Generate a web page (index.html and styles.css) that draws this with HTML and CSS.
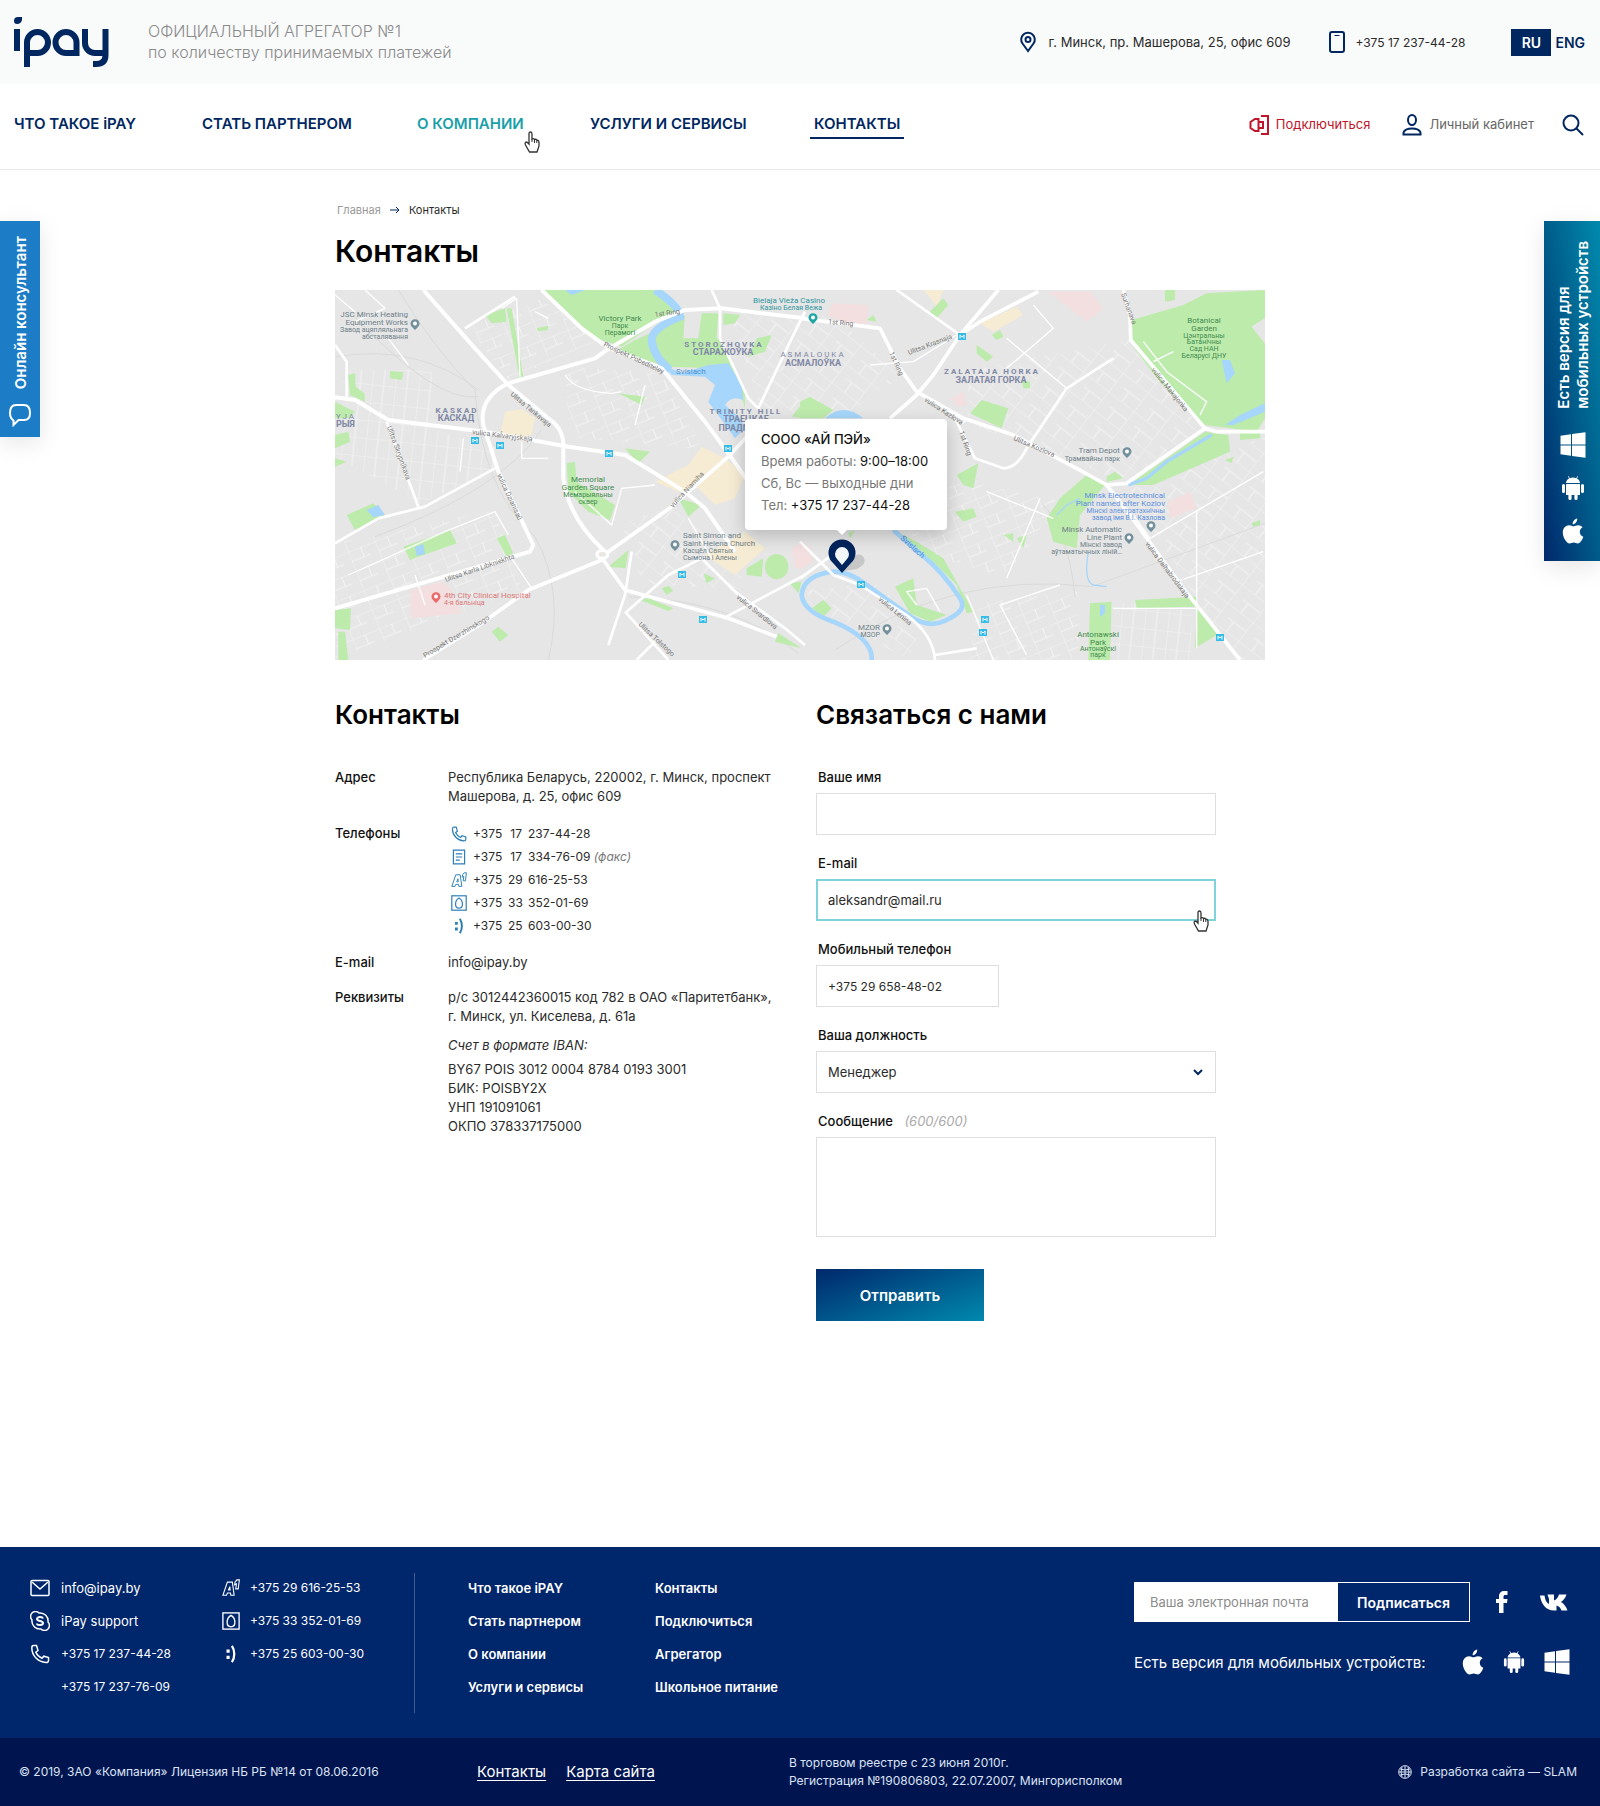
FILE: index.html
```html
<!DOCTYPE html>
<html lang="ru">
<head>
<meta charset="utf-8">
<meta name="viewport" content="width=device-width, initial-scale=1">
<title>Контакты — iPay</title>
<link rel="stylesheet" href="styles.css">
</head>
<body>
<svg class="sprite" aria-hidden="true">
  <symbol id="i-phone" viewBox="0 0 20 20"><path d="M3.500 1.500H6.500L8 6.500L5.800 8.200C7 11 9 13 12 14.300L13.800 12.200L18.500 13.600V16.500C18.500 18 17.500 18.600 16 18.500C8 18 2 12 1.800 4C1.800 2.500 2.300 1.500 3.500 1.500Z"/></symbol>
  <symbol id="i-a1" viewBox="0 0 20 20"><path d="M6 3.500H11.500L13.500 18H9.800L9.400 15.500H6L5 18H1Z M7.200 12.300H9L8.700 8.500Z M14.500 3.500L16.500 1H19.300L18 11H15.300L16 5.500L14 6.500Z" stroke-width="1.200"/></symbol>
  <symbol id="i-life" viewBox="0 0 20 20"><rect x="1" y="1" width="18" height="18"/><path d="M10 3.800C13 5.500 14.300 8.500 14.300 11.500C14.300 14.500 12.500 16.500 10 16.500S5.700 14.500 5.700 11.500C5.700 8.500 7 5.500 10 3.800Z"/></symbol>
  <symbol id="i-smile" viewBox="0 0 20 20"><path d="M5 5H8.500V8.500H5ZM5 12H8.500V15.500H5Z" fill="currentColor" stroke="none"/><path d="M11 1C14.500 6 14.500 14 11 19" fill="none" stroke-width="2.500"/></symbol>
  <symbol id="i-apple" viewBox="0 0 22 26"><path d="M15.200 0.500C15.400 3.800 13.200 6.200 10.700 6.300C10.400 3.600 12.600 1 15.200 0.500ZM20.600 9.200C18.500 10.400 17.700 12.100 17.800 14C17.900 16.300 19.200 17.900 21.300 18.800C20.500 21.500 18.300 25.300 15.800 25.500C14.300 25.500 13.500 24.600 11.700 24.600C9.900 24.600 9.100 25.500 7.600 25.500C4.600 25.500 0.800 19.700 0.800 14.600C0.800 10 3.700 7.200 7 7.200C8.900 7.200 10.300 8.300 11.400 8.300C12.500 8.300 14.100 7.200 16.300 7.200C17.900 7.200 19.600 7.900 20.600 9.200Z"/></symbol>
  <symbol id="i-android" viewBox="0 0 24 26"><path d="M7.500 1L8.800 3.200C10.700 2.400 13.300 2.400 15.200 3.200L16.500 1L17 1.400L15.900 3.600C17.700 4.600 18.800 6.100 19 8H5C5.200 6.100 6.300 4.600 8.100 3.600L7 1.400ZM5 9H19V20H16.600V23.500A1.500 1.500 0 0 1 13.400 23.500V20H10.600V23.500A1.500 1.500 0 0 1 7.400 23.500V20H5ZM1 10.500A1.500 1.500 0 0 1 4 10.500V16.500A1.500 1.500 0 0 1 1 16.500ZM20 10.500A1.500 1.500 0 0 1 23 10.500V16.500A1.500 1.500 0 0 1 20 16.500Z"/></symbol>
  <symbol id="i-windows" viewBox="0 0 26 26"><path d="M0.500 3.800L11 2.300V12.400H0.500ZM12 2.100L25.500 0.300V12.400H12ZM0.500 13.400H11V23.700L0.500 22.200ZM12 13.400H25.500V25.700L12 23.900Z"/></symbol>
  <symbol id="i-hand" viewBox="0 0 16 22"><path d="M5 13V3Q5 1 6.500 1T8 3V8Q9.500 7 10.500 8.500Q12 7.800 12.800 9.300Q15 9 15 11.500V15L13 21H5.500L1.500 14Q0.500 11.500 2 11Q3.500 11 5 13Z" fill="#fff" stroke="#333" stroke-width="1.300"/><path d="M8 8V11M10.500 9V12M12.800 10V12" stroke="#333" fill="none"/></symbol>
  <symbol id="i-metro" viewBox="0 0 8 7"><rect width="8" height="7" fill="#35bce6"/><path d="M2 5.500V2L4 4L6 2V5.500" fill="none" stroke="#fff"/></symbol>
  <symbol id="i-poi" viewBox="0 0 10 12"><path d="M5 11L2 8A4.500 4.500 0 1 1 8 8Z"/><circle cx="5" cy="4.500" r="2" fill="#fff"/></symbol>
</svg>

<header>
  <div class="topbar">
    <a class="logo" href="#" aria-label="ipay">
      <svg width="95" height="50" viewBox="0 0 95 50" fill="none" stroke="#00275f" stroke-width="6"><path d="M0 4Q0 0 4 0H8V3Q7 7 3 7Q0 7 0 4Z" fill="#00275f" stroke="none"/><path d="M3 12V34M13 50V25.500A10.500 10.500 0 1 1 23.500 36H13M52 36A10.500 10.500 0 1 1 62.500 25.500V36ZM71 12V26A10 10 0 0 0 81 36H91M91.500 12V38Q91.500 47 82 47H79"/></svg>
    </a>
    <p class="slogan">ОФИЦИАЛЬНЫЙ АГРЕГАТОР №1<br>по количеству принимаемых платежей</p>
    <div class="topbar-info">
      <svg width="18" height="22" viewBox="0 0 18 22" fill="none" stroke="#00275f" stroke-width="2"><path d="M9 20L3.500 12.500A6.800 6.800 0 1 1 14.500 12.500Z"/><circle cx="9" cy="8.500" r="2.500"/></svg>
      <span class="address">г. Минск, пр. Машерова, 25, офис 609</span>
      <svg class="mobile" width="16" height="22" viewBox="0 0 16 22" fill="none" stroke="#00275f" stroke-width="2"><rect x="1" y="1" width="14" height="20" rx="2"/><path d="M5.500 4.500H10.500" stroke-width="1"/></svg>
      <a class="tel" href="tel:+375172374428">+375 17 237-44-28</a>
      <button class="lang lang-on" type="button">RU</button>
      <button class="lang" type="button">ENG</button>
    </div>
  </div>
  <div class="navbar">
    <nav class="nav">
      <a href="#">ЧТО ТАКОЕ iPAY</a>
      <a href="#">СТАТЬ ПАРТНЕРОМ</a>
      <a class="hover" href="#">О КОМПАНИИ<svg class="cursor" width="16" height="22"><use href="#i-hand"/></svg></a>
      <a href="#">УСЛУГИ И СЕРВИСЫ</a>
      <a class="current" href="#">КОНТАКТЫ</a>
    </nav>
    <div class="nav-tools">
      <a class="tool connect" href="#"><svg width="20" height="22" viewBox="0 0 20 22" fill="none" stroke="#c0142b" stroke-width="2"><path d="M9.500 5H6L1.500 8V14L6 17H9.500ZM9.500 8H14V14H9.500M12 2H19V20H12"/></svg>Подключиться</a>
      <a class="tool account" href="#"><svg width="20" height="22" viewBox="0 0 20 22" fill="none" stroke="#00275f" stroke-width="2"><ellipse cx="10" cy="6" rx="4" ry="5"/><path d="M1.500 20.500V18.500Q3 14.500 10 14.500T18.500 18.500V20.500Z"/></svg>Личный кабинет</a>
      <button class="search" type="button" aria-label="Поиск"><svg width="22" height="22" viewBox="0 0 22 22" fill="none" stroke="#00275f" stroke-width="2"><circle cx="9" cy="9" r="7.500"/><path d="M14.500 14.500L21 21"/></svg></button>
    </div>
  </div>
</header>

<main class="content">
  <nav class="crumbs"><a href="#">Главная</a><svg width="10" height="8" viewBox="0 0 10 8" fill="none" stroke="#00275f"><path d="M0 4H9M6 1L9 4L6 7"/></svg><span>Контакты</span></nav>
  <h1>Контакты</h1>

  <section class="map" aria-label="Карта">
    <svg class="map-art" viewBox="0 0 2790 1110" fill="none">
      <defs>
        <pattern id="blocks-a" width="86" height="62" patternUnits="userSpaceOnUse" patternTransform="rotate(-22)"><path d="M0 0H86M0 0V62M40 0V30M0 30H60" stroke="#f4f4f4" stroke-width="3"/></pattern>
        <pattern id="blocks-b" width="96" height="70" patternUnits="userSpaceOnUse" patternTransform="rotate(38)"><path d="M0 0H96M0 0V70M50 35V70M30 35H96" stroke="#f4f4f4" stroke-width="3"/></pattern>
        <pattern id="blocks-c" width="70" height="54" patternUnits="userSpaceOnUse" patternTransform="rotate(6)"><path d="M0 0H70M0 0V54M35 0V54" stroke="#f4f4f4" stroke-width="3"/></pattern>
      </defs>
      <rect width="2790" height="1110" fill="#e6e6e6"/>
      <path fill="url(#blocks-c)" d="M40 240H290V420L480 470V540L260 640L0 500V320Z"/>
      <path fill="url(#blocks-a)" d="M0 760L480 660L560 900L0 1110ZM400 110L640 20L790 150L520 270ZM690 230L980 250L1110 480L700 440ZM1650 520L2200 640L2000 860L1750 780ZM1930 940L2230 900V1110H1900Z"/>
      <path fill="url(#blocks-b)" d="M1180 60L1500 80L1700 260L1500 400L1280 360ZM860 700L1000 650L1200 800L1230 900L920 880ZM1900 240L2380 150L2600 420L2380 580L1900 400ZM2380 600L2790 440V1110H2700ZM1420 900L1620 880L1760 1000L1720 1110L1420 940Z"/>
      <path fill="url(#blocks-c)" d="M2300 940H2570V1110H2300Z"/>
      <path d="M190 0Q300 180 420 300Q440 600 600 740Q690 900 640 1110M0 200Q250 160 430 300M120 740Q500 600 620 420M880 920Q1200 930 1390 1090M1500 1080Q1850 840 2270 890L2790 700M2120 640Q2200 720 2220 920M40 60Q300 340 430 320" stroke="#d9dbd8" stroke-width="3"/>

      <g transform="translate(0 -15)">
        <g fill="#f6ebd3"><path d="M510 380L560 372L600 400L590 450L530 462L498 440ZM960 590L1060 540L1100 485L1170 520L1230 570L1200 640L1140 660L1090 610L1030 620ZM1110 810L1230 740L1290 790L1200 870Z"/></g>
        <g fill="#f3dfdf"><path d="M225 915L320 890L345 910L380 985L230 1000ZM1370 790L1410 770V850L1380 850Z"/></g>
        <g fill="#bdebac">
          <path d="M620 15H975L1000 60L1030 85L960 115L860 185L815 170L765 155L690 90ZM840 200L900 165L980 130L1050 90L1045 160L1150 160L1190 230L1230 310V370L1200 280L1130 250L1000 245ZM1100 85H1150L1145 160H1090ZM1165 85L1215 90L1200 115L1165 120ZM515 70H530L565 275H553ZM450 90L510 70L515 110L470 115ZM605 130L640 122L638 136L608 138Z"/>
          <path d="M40 270L60 265L62 305L88 325L90 350L45 330ZM165 258L205 262L200 285L165 280ZM0 350L60 380L40 400H0ZM0 450L40 440L45 470L0 490ZM0 520L35 530L0 545ZM850 325L930 335L920 360ZM695 535L720 530L725 590L840 660L825 705L760 680L700 620ZM870 490L945 500L910 535ZM1030 640L1100 660L1060 695Z"/>
          <path d="M35 690L115 655L150 690L60 735ZM205 785L345 735L365 775L225 825ZM485 760L510 750L535 805L515 815ZM0 975L48 970L45 1035L0 1030ZM10 1040H30L40 1125H10ZM470 1040L490 1025L520 1050L495 1070ZM820 845L880 795L872 850ZM915 945L940 940L1015 970L1000 978ZM980 910L1000 902L1015 917L995 929ZM1235 850L1285 820L1280 875L1235 870ZM1105 865L1140 880L1115 895ZM1330 1045L1400 1090L1320 1070ZM1365 895L1400 890L1390 925ZM1265 160L1310 150L1290 200L1240 215ZM1370 395L1410 345V400Z"/>
          <ellipse cx="1325" cy="845" rx="35" ry="38"/>
        </g>
        <path d="M960 15Q1035 65 1035 95Q950 130 950 165Q955 215 1005 255" stroke="#a6d6fb" stroke-width="24"/>
        <g fill="#a6d6fb"><path d="M985 240L1040 265L1120 240L1180 235L1220 300L1225 345Q1190 330 1170 360L1215 400L1230 430L1200 460L1120 350L1140 300L1110 275L1010 270ZM240 785L265 778L270 808L245 812ZM95 675L130 660L150 690L115 697ZM690 15H750L710 30Z"/></g>
      </g>
      <g transform="translate(1395 -15)">
        <g fill="#f3dfdf"><path d="M100 55L205 60L200 115L150 120L80 90ZM745 20H870L910 70L860 110ZM1105 650L1170 620L1190 670L1110 700ZM455 340L490 320L500 360L470 365ZM0 800L30 780L40 830L0 850Z"/></g>
        <g fill="#f6ebd3"><path d="M540 115L650 65L670 90L580 140ZM370 15H430L410 65Z"/></g>
        <g fill="#bdebac">
          <path d="M995 105L1150 60L1220 25L1395 15V100L1355 125L1395 175V400L1370 440L1215 420L1080 290L1000 185ZM1095 15H1125V45L1095 50ZM0 350L30 335L100 375L70 400H0ZM385 85L430 40L445 60L410 100ZM530 180L580 215L560 230L530 205ZM510 385L545 345L625 370L605 430ZM470 570L535 535L520 610L490 600ZM465 680L520 670L530 695L490 710ZM575 150L600 135L610 155L590 165ZM200 105L220 90L230 110ZM665 285L690 290L690 310L670 310Z"/>
          <path d="M860 570L915 600L840 690L830 790L760 770L740 700L780 640ZM985 600L1215 440L1285 450L1290 500L1060 600ZM920 575L945 560L970 580L920 590ZM1005 945L1190 935V965L1010 970ZM870 955L935 950L930 1125H865ZM1190 970L1235 1010L1250 1050L1185 1090ZM300 745L350 770L430 820L520 980L500 985L470 900L410 840ZM285 905L340 880L350 960L440 990L390 1010L330 985ZM35 970L70 945L95 970L70 995ZM610 750L640 745L640 770ZM650 760L680 750L670 790ZM1355 715L1380 705V720L1360 725ZM1275 525L1300 515L1295 535ZM145 745L165 735L150 760ZM1320 440H1380V460L1320 465Z"/>
        </g>
        <path d="M1355 125L1395 100V175Z" fill="#e6e6e6"/>
        <path d="M280 735L360 805Q430 860 480 940Q505 975 440 1005Q390 1030 340 1000L200 900Q150 860 100 860Q10 870 5 930Q10 980 100 1010Q220 1060 215 1125" stroke="#a6d6fb" stroke-width="14"/>
        <path d="M1235 450L1100 530L1040 580L985 600" stroke="#a6d6fb" stroke-width="10"/>
        <path d="M865 800Q850 890 880 900L920 905M770 690L800 660L840 640" stroke="#a6d6fb" stroke-width="4"/>
        <g fill="#a6d6fb"><path d="M75 400Q130 350 190 400ZM1265 225H1290L1305 265L1280 295ZM1395 355L1320 390L1275 420H1300L1395 380ZM900 960H915V985L900 995Z"/></g>
      </g>

      <g stroke="#fff" stroke-linejoin="round">
        <g transform="translate(0 -15)" stroke-width="12">
          <path d="M265 15L420 190L520 300L640 400Q685 430 685 480V580Q700 700 810 800M0 337L60 345L160 405L450 440L700 485L870 510L1050 620L1110 670L1200 800M620 15L740 130L815 185L980 250L1110 410L1180 505L1240 590M815 195L780 220L520 295Q430 340 445 420L490 560L595 780L585 800L0 970M815 195L960 110L1050 75L1160 70L1410 100"/>
          <path d="M265 1125L440 1015L580 915L800 825L820 800L1010 665L1180 515L1240 450M805 825L870 915L1180 1000L1325 1055" stroke-width="11"/>
          <path d="M390 130L540 35M0 775L130 700L270 665L480 550M155 410L250 665M820 1080L870 930L890 800M870 980L1000 1125M870 985L1000 870L1100 820L1200 920L1350 1030L1410 1080M0 180L35 230V335M1130 15L1155 70V160L1240 340L1270 370L1370 160L1410 80M1165 1000L1410 870M905 1125L960 1070" stroke-width="8"/>
          <path d="M500 70L545 40L555 275M600 80L640 100M690 270Q720 320 830 325L860 320M930 300L900 420M720 620L830 720L860 610L960 600M40 870L330 740L480 680L520 750M385 460L375 560M560 470V520H640M240 870L270 960M530 820L590 910M0 30L60 80M1060 700L1130 820M90 15L150 70L60 110M160 160L220 240" stroke-width="4"/>
          <ellipse cx="802" cy="808" rx="16" ry="12" fill="#e9e6df" stroke-width="10"/>
        </g>
        <g transform="translate(1395 -15)" stroke-width="11">
          <path d="M0 100L200 125L240 130L300 250L350 320L490 400L640 450L830 550L920 600L990 690L1150 910L1320 1125M595 15L480 150L400 270L350 330L270 400M715 20L540 110L480 150M970 15L990 90L992 165L1215 430L1250 440H1395M1215 430L980 595L920 600"/>
          <path d="M290 15L480 150M465 400L525 520L610 550Q650 550 680 490L800 310L940 220M0 770L100 870L180 900L320 990Q400 1050 405 1125M0 880L90 815M405 1110L530 1090" stroke-width="8"/>
          <path d="M480 420L500 405L640 450M1030 170L1100 260L1220 350L1200 390M1060 230L1120 200M1000 690L1050 760L1390 560M940 970H1190M580 1125L500 930M680 1110L600 960L780 900M1190 680V1090M210 240L340 230L470 150M620 160L800 310M700 60L760 130L620 250M560 620L760 700M620 880L720 640M350 960L320 920L380 910L420 980M1130 890L1390 800" stroke-width="4"/>
        </g>
      </g>
    </svg>

    <svg class="map-art map-labels" viewBox="0 0 930 370">
      <g class="l-area" text-anchor="middle">
        <text x="122" y="123" class="wide">KASKAD</text><text x="121" y="131">КАСКАД</text>
        <text x="389" y="57" class="wide">STOROZHOVKA</text><text x="388" y="65">СТАРАЖОЎКА</text>
        <text x="478" y="67" class="wide thin">ASMALOUKA</text><text x="478" y="76">АСМАЛОЎКА</text>
        <text x="657" y="84" class="wide">ZALATAJA HORKA</text><text x="656" y="93">ЗАЛАТАЯ ГОРКА</text>
        <text x="411" y="124" class="wide">TRINITY HILL</text><text x="411" y="132">ТРАЕЦКАЕ</text><text x="411" y="141">ПРАДМЕСЦЕ</text>
        <g text-anchor="start"><text x="1" y="129" class="wide thin">YJA</text><text x="1" y="137">РЫЯ</text></g>
      </g>
      <g class="l-poi" text-anchor="end">
        <text x="73" y="27">JSC Minsk Heating</text><text x="73" y="35">Equipment Works</text><g class="sub"><text x="73" y="42">Завод ацяпляльнага</text><text x="73" y="49">абсталявання</text></g>
        <text x="785" y="163">Tram Depot</text><text x="785" y="171" class="sub">Трамвайны парк</text>
        <text x="787" y="242">Minsk Automatic</text><text x="787" y="250">Line Plant</text><g class="sub"><text x="787" y="257">Мінскі завод</text><text x="787" y="264">аўтаматычных ліній…</text></g>
        <text x="545" y="340">MZOR</text><text x="545" y="347" class="sub">МЗОР</text>
      </g>
      <g class="l-poi"><text x="348" y="248">Saint Simon and</text><text x="348" y="256">Saint Helena Church</text><g class="sub"><text x="348" y="263">Касцёл Святых</text><text x="348" y="270">Сымона і Алены</text></g></g>
      <g class="l-blue" text-anchor="end"><text x="830" y="208">Minsk Electrotechnical</text><text x="830" y="216">Plant named after Kozlov</text><g class="sub"><text x="830" y="223">Мінскі электратэхнічны</text><text x="830" y="230">завод імя В.І. Казлова</text></g></g>
      <g class="l-park" text-anchor="middle">
        <text x="285" y="31">Victory Park</text><g class="sub"><text x="285" y="38">Парк</text><text x="285" y="45">Перамогі</text></g>
        <text x="253" y="192">Memorial</text><text x="253" y="200">Garden Square</text><g class="sub"><text x="253" y="207">Мемарыяльны</text><text x="253" y="214">сквер</text></g>
        <text x="869" y="33">Botanical</text><text x="869" y="41">Garden</text><g class="sub"><text x="869" y="48">Цэнтральны</text><text x="869" y="54">Батанічны</text><text x="869" y="61">Сад НАН</text><text x="869" y="68">Беларусі ДНУ</text></g>
        <text x="763" y="347">Antonawski</text><text x="763" y="355">Park</text><g class="sub"><text x="763" y="361">Антонаўскі</text><text x="763" y="367">парк</text></g>
      </g>
      <g class="l-teal" text-anchor="middle"><text x="454" y="13">Bielaja Vieža Casino</text><text x="456" y="20" class="sub">Казіно Белая Вежа</text></g>
      <g class="l-red"><text x="109" y="308">4th City Clinical Hospital</text><text x="109" y="315" class="sub">4-я бальніца</text></g>
      <g class="l-road">
        <text transform="translate(175 105) rotate(40)">Ulitsa Tankavaja</text>
        <text transform="translate(268 56) rotate(25)">Prospekt Pobediteley</text>
        <text transform="translate(137 144) rotate(7)">vulica Kaĺvaryjskaja</text>
        <text transform="translate(162 185) rotate(65)">vulica Dzianisaŭ</text>
        <text transform="translate(52 137) rotate(70)">Ulitsa Skrypnikava</text>
        <text transform="translate(111 292) rotate(-19)">Ulitsa Karla Libkniekhta</text>
        <text transform="translate(90 368) rotate(-31)">Prospekt Dzerzhinskogo</text>
        <text transform="translate(303 335) rotate(43)">Ulitsa Tolstogo</text>
        <text transform="translate(401 308) rotate(39)">vulica Svardlova</text>
        <text transform="translate(338 218) rotate(-47)">vulica Niamiha</text>
        <text transform="translate(320 27) rotate(-8)">1st Ring</text>
        <text transform="translate(493 34) rotate(5)">1st Ring</text>
        <text transform="translate(554 63) rotate(65)">1st Ring</text>
        <text transform="translate(574 65) rotate(-21)">Ulitsa Krasnaja</text>
        <text transform="translate(589 111) rotate(33)">vulica Kazlova</text>
        <text transform="translate(678 150) rotate(23)">Ulitsa Kozlova</text>
        <text transform="translate(624 142) rotate(70)">1st Ring</text>
        <text transform="translate(816 80) rotate(51)">vulica Makajonka</text>
        <text transform="translate(810 254) rotate(53)">vulica Dalhabrodskaja</text>
        <text transform="translate(543 310) rotate(39)">vulica Lenina</text>
        <text transform="translate(786 4) rotate(70)">Surhanava</text>
      </g>
      <g class="l-water"><text x="341" y="84">Svislach</text><text transform="translate(565 249) rotate(42)">Svislach</text></g>
      <g><use href="#i-metro" x="136" y="147" width="8" height="7"/><use href="#i-metro" x="161" y="152" width="8" height="7"/><use href="#i-metro" x="270" y="160" width="8" height="7"/><use href="#i-metro" x="389" y="155" width="8" height="7"/><use href="#i-metro" x="343" y="281" width="8" height="7"/><use href="#i-metro" x="364" y="326" width="8" height="7"/><use href="#i-metro" x="623" y="43" width="8" height="7"/><use href="#i-metro" x="522" y="291" width="8" height="7"/><use href="#i-metro" x="646" y="326" width="8" height="7"/><use href="#i-metro" x="644" y="339" width="8" height="7"/><use href="#i-metro" x="881" y="344" width="8" height="7"/></g>
      <g fill="#73909c"><use href="#i-poi" x="75" y="29" width="10" height="12"/><use href="#i-poi" x="335" y="250" width="10" height="12"/><use href="#i-poi" x="787" y="157" width="10" height="12"/><use href="#i-poi" x="811" y="231" width="10" height="12"/><use href="#i-poi" x="789" y="243" width="10" height="12"/><use href="#i-poi" x="547" y="334" width="10" height="12"/></g>
      <use href="#i-poi" x="473" y="23" width="10" height="12" fill="#1fa5a5"/><use href="#i-poi" x="96" y="302" width="10" height="12" fill="#ea6a6a"/>
      <path d="M509 281Q516 274 519 266Q526 262 529 268T522 279Z" fill="#999" opacity=".4"/>
      <path d="M507 283L498 273A13.500 13.500 0 1 1 516 273Z" fill="#00245c"/><path d="M507 275L502 269A7 7 0 1 1 512 269Z" fill="#f4f7fa"/>
    </svg>

    <div class="balloon">
      <p class="dark">СООО «АЙ ПЭЙ»</p>
      <p>Время работы: <span class="dark">9:00–18:00</span></p>
      <p>Сб, Вс — выходные дни</p>
      <p>Тел: <span class="dark">+375 17 237-44-28</span></p>
    </div>
  </section>

  <div class="columns">
    <section>
      <h2>Контакты</h2>
      <dl class="details">
        <dt>Адрес</dt>
        <dd>Республика Беларусь, 220002, г. Минск, проспект Машерова, д. 25, офис 609</dd>
        <dt class="tall">Телефоны</dt>
        <dd>
          <ul class="phones">
            <li><svg width="16" height="16"><use href="#i-phone"/></svg><span>+375</span><span class="code">17</span><span>237-44-28</span></li>
            <li><svg width="16" height="16" viewBox="0 0 20 20"><path d="M3 1.500H17V18.500H3ZM6 6H14M6 10H14M6 14H11"/></svg><span>+375</span><span class="code">17</span><span>334-76-09 <i class="muted">(факс)</i></span></li>
            <li><svg width="16" height="16"><use href="#i-a1"/></svg><span>+375</span><span class="code">29</span><span>616-25-53</span></li>
            <li><svg width="16" height="16"><use href="#i-life"/></svg><span>+375</span><span class="code">33</span><span>352-01-69</span></li>
            <li><svg width="16" height="16"><use href="#i-smile"/></svg><span>+375</span><span class="code">25</span><span>603-00-30</span></li>
          </ul>
        </dd>
        <dt>E-mail</dt>
        <dd><a href="mailto:info@ipay.by">info@ipay.by</a></dd>
        <dt>Реквизиты</dt>
        <dd>р/с 3012442360015 код 782 в ОАО «Паритетбанк»,<br>г. Минск, ул. Киселева, д. 61а
          <p class="iban">Счет в формате IBAN:</p>
          BY67 POIS 3012 0004 8784 0193 3001<br>БИК: POISBY2X<br>УНП 191091061<br>ОКПО 378337175000</dd>
      </dl>
    </section>

    <section>
      <h2>Связаться с нами</h2>
      <form class="form">
        <div class="field"><label for="name">Ваше имя</label><input id="name" type="text"></div>
        <div class="field"><label for="email">E-mail</label><input class="focused" id="email" type="email" value="aleksandr@mail.ru"><svg class="cursor" width="16" height="22"><use href="#i-hand"/></svg></div>
        <div class="field"><label for="mobile">Мобильный телефон</label><input class="short" id="mobile" type="tel" value="+375 29 658-48-02"></div>
        <div class="field"><label for="job">Ваша должность</label>
          <select id="job"><option>Менеджер</option></select>
          <svg class="chevron" width="10" height="8" viewBox="0 0 10 8" fill="none" stroke="#00275f" stroke-width="2"><path d="M1 2L5 6L9 2"/></svg></div>
        <div class="field"><label for="msg">Сообщение <i>(600/600)</i></label><textarea id="msg"></textarea></div>
        <button class="send" type="submit">Отправить</button>
      </form>
    </section>
  </div>
</main>

<footer>
  <div class="footer-main">
    <ul class="f-col f-mail">
      <li class="text"><svg width="20" height="20" viewBox="0 0 20 20"><rect x="1" y="2.500" width="18" height="15" rx="1"/><path d="M2 4L10 11L18 4"/></svg><a href="mailto:info@ipay.by">info@ipay.by</a></li>
      <li class="text"><svg width="20" height="20" viewBox="0 0 20 20"><path d="M2 9A8 8 0 0 0 11 18A4.700 4.700 0 0 0 18 11A8 8 0 0 0 9 2A4.700 4.700 0 0 0 2 9Z"/><path d="M13 7.500Q12.500 6 10 6T7 8Q7 9.300 10 10T13 12Q13 14 10 14T7 12.500" stroke-width="2"/></svg><a href="#">iPay support</a></li>
      <li><svg width="20" height="20"><use href="#i-phone"/></svg><a href="tel:+375172374428">+375 17 237-44-28</a></li>
      <li><svg width="20" height="20"></svg><a href="tel:+375172377609">+375 17 237-76-09</a></li>
    </ul>
    <ul class="f-col f-tel">
      <li><svg width="18" height="20"><use href="#i-a1"/></svg><a href="tel:+375296162553">+375 29 616-25-53</a></li>
      <li><svg width="18" height="20"><use href="#i-life"/></svg><a href="tel:+375333520169">+375 33 352-01-69</a></li>
      <li><svg width="18" height="20"><use href="#i-smile"/></svg><a href="tel:+375256030030">+375 25 603-00-30</a></li>
    </ul>
    <ul class="f-col f-links">
      <li><a href="#">Что такое iPAY</a></li><li><a href="#">Стать партнером</a></li><li><a href="#">О компании</a></li><li><a href="#">Услуги и сервисы</a></li>
    </ul>
    <ul class="f-col f-links2">
      <li><a href="#">Контакты</a></li><li><a href="#">Подключиться</a></li><li><a href="#">Агрегатор</a></li><li><a href="#">Школьное питание</a></li>
    </ul>
    <div class="f-right">
      <div class="f-row social">
        <form class="subscribe"><input type="email" aria-label="Ваша электронная почта" placeholder="Ваша электронная почта"><button type="submit">Подписаться</button></form>
        <a href="#" aria-label="Facebook"><svg width="12" height="22" viewBox="0 0 12 22"><path d="M3 22V12H0V8H3V5.500C3 2 5 0 8.500 0H11.500V4H9.500C8 4 7.500 4.500 7.500 6V8H11.500L11 12H7.500V22Z"/></svg></a>
        <a href="#" aria-label="VK"><svg width="28" height="17" viewBox="0 0 28 17"><path d="M15 16.500C6 17 1 10 0 1.500H4.500C5 5.500 6.500 9 9 10V5L7.500 0.500H14V6.500C16 6 18 3.500 19 0.500H26.500C25.500 4 23 6.500 21 8C23.500 9.500 26 12 27.500 16.500H21.500C20.500 14 19 12 16.500 11.500V16.500Z"/></svg></a>
      </div>
      <div class="f-row apps">
        <span>Есть версия для мобильных устройств:</span>
        <a href="#" aria-label="App Store"><svg width="22" height="26"><use href="#i-apple"/></svg></a>
        <a href="#" aria-label="Android"><svg width="22" height="26"><use href="#i-android"/></svg></a>
        <a href="#" aria-label="Windows"><svg width="26" height="26"><use href="#i-windows"/></svg></a>
      </div>
    </div>
  </div>
  <div class="footer-legal">
    <span class="copy">© 2019, ЗАО «Компания» Лицензия НБ РБ №14 от 08.06.2016</span>
    <nav class="legal-links"><a href="#">Контакты</a><a href="#">Карта сайта</a></nav>
    <p>В торговом реестре с 23 июня 2010г.<br>Регистрация №190806803, 22.07.2007, Мингорисполком</p>
    <span class="studio"><svg width="14" height="14" viewBox="0 0 14 14" fill="none" stroke="#dce3f5"><circle cx="7" cy="7" r="6.300"/><path d="M7 1V13M1 7H13M2 4Q7 6 12 4M2 10Q7 8 12 10M4 2Q2 7 4 12M10 2Q12 7 10 12"/></svg>Разработка сайта — SLAM</span>
  </div>
</footer>

<a class="side side-left" href="#"><svg width="22" height="24" viewBox="0 0 22 24" fill="none" stroke="#fff" stroke-width="2"><path d="M4.500 22V17.500Q1 15 1 10Q1 2 7 2H15Q21 2 21 10Q21 17 15 17H9.500Z"/></svg><span>Онлайн консультант</span></a>
<aside class="side side-right">
  <span>Есть версия для<br>мобильных устройств</span>
  <svg width="26" height="26"><use href="#i-windows"/></svg>
  <svg width="24" height="26"><use href="#i-android"/></svg>
  <svg width="22" height="26"><use href="#i-apple"/></svg>
</aside>
</body>
</html>
```
FILE: styles.css
```css
* { box-sizing: border-box; }
body { margin: 0; position: relative; background: #fff; color: #2b2b2b; font: 13px/19px Inter, "Open Sans", sans-serif; }
a { color: inherit; text-decoration: none; }
p, ul, dl, dd, h1, h2 { margin: 0; padding: 0; }
ul { list-style: none; }
svg { flex: none; display: block; }
button, input, select, textarea { font: inherit; color: inherit; }
button { cursor: pointer; border: 0; background: none; }
.sprite { position: absolute; width: 0; height: 0; }

/* header */
.topbar { display: flex; align-items: center; height: 84px; padding: 0 15px 0 14px; background: #f9fafa; }
.slogan { margin-left: 39px; color: #8b8b8b; font-size: 16px; font-weight: 300; line-height: 21px; }
.topbar-info { display: flex; align-items: center; margin-left: auto; }
.address { margin-left: 11px; width: 281px; }
.tel { margin-left: 10px; width: 156px; font-size: 12px; }
.lang { padding: 0 4px; height: 27px; color: #00275f; font-size: 14px; font-weight: 600; }
.lang:last-child { padding-right: 0; }
.lang-on { width: 40px; padding: 0; background: #00275f; color: #fff; }

.navbar { display: flex; align-items: center; height: 86px; padding: 0 16px 0 14px; border-bottom: 1px solid #e9e9e9; }
.nav { display: grid; grid-template-columns: 188px 215px 173px 220px auto; justify-items: start; align-items: center; padding-bottom: 6px; color: #00275f; font-size: 15px; font-weight: 600; line-height: 20px; }
.nav a { position: relative; }
.nav .hover { color: #1a9fa9; }
.nav .cursor { position: absolute; left: 100%; top: 17px; }
.current { padding: 0 4px; }
.current::after { content: ""; position: absolute; left: 0; right: 0; top: 23px; height: 2px; background: #00275f; }
.nav-tools { display: flex; align-items: center; margin-left: auto; padding-bottom: 4px; color: #666; }
.tool { display: flex; align-items: center; gap: 7px; margin-right: 32px; }
.connect { color: #c0142b; }
.account { margin-right: 28px; }
.search { padding: 0; }

/* content */
.content { width: 100%; max-width: 930px; margin: 0 auto; padding: 33px 0 226px; }
.crumbs { display: flex; align-items: center; gap: 9px; margin: 0 0 16px 2px; font-size: 11px; line-height: 14px; }
.crumbs a { color: #999; }
h1, h2 { color: #000; font-weight: 600; }
h1 { margin-bottom: 21px; font-size: 30px; line-height: 36px; }
h2 { margin-bottom: 38px; font-size: 26px; line-height: 30px; }

.map { position: relative; }
.map-art { width: 100%; height: auto; }
.map-labels { position: absolute; left: 0; top: 0; font: 8px Roboto, sans-serif; }
.l-area { fill: #8088a5; font-weight: 700; font-size: 9px; }
.wide { font-size: 8px; letter-spacing: 2px; }
.thin { font-weight: 400; }
.l-poi { fill: #6d8088; }
.l-blue { fill: #5b8fe0; }
.l-park { fill: #3d8a4c; }
.l-teal { fill: #2d96a0; }
.l-red { fill: #dc7777; }
.l-water { fill: #4a90d9; }
.l-road { fill: #777; font-size: 7px; }
.sub { font-size: 7px; }
.balloon { position: absolute; left: 410px; top: 129px; width: 202px; padding: 9px 16px 14px; background: #fff; border-radius: 4px; box-shadow: 0 6px 18px rgba(0, 0, 0, .2); color: #777; line-height: 22px; white-space: nowrap; }
.balloon::after { content: ""; position: absolute; left: 92px; top: 100%; border: 5px solid transparent; border-top-color: #fff; }
.dark { color: #111; }
p.dark { font-weight: 500; }

.columns { display: grid; grid-template-columns: 449px 400px; column-gap: 32px; margin-top: 40px; }
.details { display: grid; grid-template-columns: 113px 1fr; row-gap: 16px; }
dt { color: #111; font-weight: 500; }
dd { max-width: 334px; }
.tall { line-height: 23px; }
.phones { font-size: 12px; }
.phones li { display: grid; grid-template-columns: 16px 29px 14px 1fr; align-items: center; padding-left: 3px; column-gap: 6px; line-height: 23px; }
.phones svg { fill: none; stroke: #2d7fb8; stroke-width: 1.500; color: #2d7fb8; }
.code { text-align: right; }
.muted { color: #777; }
.iban { margin: 10px 0 5px; font-style: italic; }

.form { display: flex; flex-direction: column; align-items: flex-start; gap: 20px; padding-top: 1px; }
.field { position: relative; display: flex; flex-direction: column; gap: 8px; width: 100%; }
.field label { padding-left: 2px; color: #111; font-weight: 500; line-height: 16px; }
.field label i { margin-left: 8px; color: #aaa; font-weight: 400; }
.field input, .field select, .field textarea { width: 100%; height: 42px; padding: 0 11px; border: 1px solid #dedede; border-radius: 0; background: #fff; outline: 0; appearance: none; }
.field .focused { padding: 0 10px; border: 2px solid #7fd3da; }
.field .short { width: 183px; font-size: 12px; }
.field textarea { height: 100px; resize: none; display: block; }
.field .cursor { position: absolute; right: 7px; bottom: -11px; }
.chevron { position: absolute; right: 13px; bottom: 17px; }
.send { width: 168px; height: 52px; margin-top: 12px; background: linear-gradient(160deg, #00286b, #0089ae); color: #fff; font-size: 15px; font-weight: 600; }

/* footer */
footer { color: #fff; }
.footer-main { display: flex; padding: 26px 30px 25px; min-height: 191px; background: #00266b; }
.f-col { display: flex; flex-direction: column; gap: 13px; padding-top: 5px; line-height: 20px; }
.f-col li { display: flex; align-items: center; gap: 11px; height: 20px; }
.f-col svg { fill: none; stroke: #fff; stroke-width: 1.500; }
.f-mail { width: 192px; font-size: 12px; }
.f-mail .text { font-size: 13px; }
.f-tel { width: 193px; border-right: 1px solid #405c90; font-size: 12px; }
.f-tel li { gap: 10px; }
.f-links { width: 240px; padding-left: 53px; font-weight: 600; }
.f-links2 { font-weight: 600; }
.f-right { margin-left: auto; width: 436px; padding-top: 9px; fill: #fff; }
.f-row { display: flex; align-items: center; }
.social { gap: 32px; }
.subscribe { display: flex; width: 336px; height: 40px; margin-right: -6px; border: 1px solid #fff; }
.subscribe input { flex: 1; min-width: 0; padding: 0 15px; border: 0; background: #fff; color: #333; font-size: 13px; }
.subscribe input::placeholder { color: #8c8c8c; opacity: 1; }
.subscribe button { width: 131px; padding: 0; font-size: 14px; font-weight: 600; }
.apps { gap: 19px; margin-top: 27px; font-size: 15px; }
.apps span { margin-right: auto; }
.footer-legal { display: grid; grid-template-columns: 458px 312px 1fr auto; align-items: center; min-height: 68px; padding: 0 23px 0 19px; background: #00154f; color: #dce3f5; font-size: 12px; line-height: 18px; }
.legal-links { display: flex; gap: 20px; color: #fff; font-size: 15px; }
.legal-links a { text-decoration: underline; text-underline-offset: 3px; }
.studio { display: flex; align-items: center; gap: 8px; }

/* side tabs */
.side { position: absolute; top: 221px; display: flex; flex-direction: column; align-items: center; color: #fff; font-size: 15px; font-weight: 600; box-shadow: 0 6px 24px rgba(0, 0, 0, .1); }
.side span { writing-mode: vertical-rl; transform: rotate(180deg); white-space: nowrap; line-height: 19px; }
.side-left { left: 0; width: 40px; height: 216px; flex-direction: column-reverse; justify-content: flex-start; gap: 14px; padding-bottom: 10px; background: #1c7cc6; }
.side-left { flex-direction: column-reverse; }
.side-right { right: 0; width: 56px; height: 340px; justify-content: flex-end; gap: 17px; padding: 0 0 17px 2px; background: linear-gradient(to top right, #00286b, #005c8a 50%, #008aad); fill: #fff; }
.side-right span { margin-bottom: 6px; }
```
